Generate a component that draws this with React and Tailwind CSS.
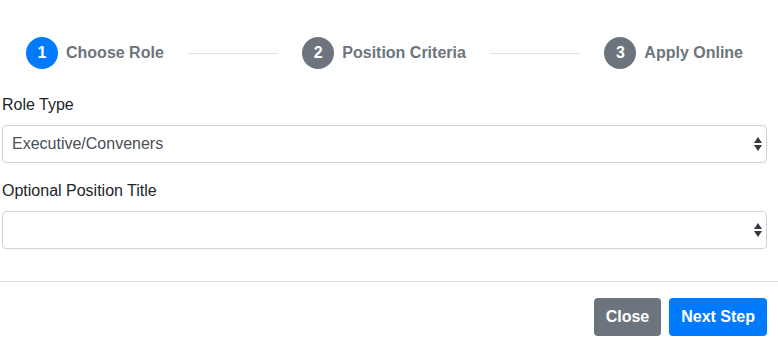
import React from "react";

const font = { fontFamily: '"Liberation Sans", Arial, sans-serif' };

function Step({ n, label, active }) {
  return (
    <div className="flex items-center shrink-0">
      <div
        className={`w-8 h-8 rounded-full flex items-center justify-center text-white font-bold text-[16px] ${
          active ? "bg-[#007bff]" : "bg-[#6c757d]"
        }`}
      >
        {n}
      </div>
      <span className="ml-2 font-bold text-[16px] text-[#6c757d]">{label}</span>
    </div>
  );
}

function Arrows() {
  return (
    <svg
      width="8"
      height="16"
      viewBox="0 0 8 16"
      className="absolute right-[4px] top-1/2 -translate-y-1/2 pointer-events-none"
    >
      <path d="M4 1 L8 7 L0 7 Z" fill="#343a40" />
      <path d="M0 9 L8 9 L4 15 Z" fill="#343a40" />
    </svg>
  );
}

function Select({ value }) {
  return (
    <div className="relative h-[38px] border border-[#ced4da] rounded-[4px] bg-white flex items-center pl-[9px] text-[16px] text-[#495057]">
      <span>{value}</span>
      <Arrows />
    </div>
  );
}

export default function App() {
  return (
    <div className="w-[778px] h-[344px] bg-white overflow-hidden text-[#212529]" style={font}>
      <div className="flex items-center pt-[37px] pl-[26px] pr-[35px]">
        <Step n="1" label="Choose Role" active />
        <div className="flex-1 h-px bg-[#dee2e6] mx-6" />
        <Step n="2" label="Position Criteria" />
        <div className="flex-1 h-px bg-[#dee2e6] mx-6" />
        <Step n="3" label="Apply Online" />
      </div>
      <div className="pl-[2px] pr-[11px] pt-[24px]">
        <div className="mb-4">
          <div className="text-[16px] leading-6 mb-2">Role Type</div>
          <Select value="Executive/Conveners" />
        </div>
        <div className="mb-4">
          <div className="text-[16px] leading-6 mb-2">Optional Position Title</div>
          <Select value="" />
        </div>
      </div>
      <div className="mt-8 border-t border-[#dee2e6] flex justify-end gap-2 pt-4 pr-[11px]">
        <button className="h-[38px] px-3 rounded-[4px] bg-[#6c757d] text-white text-[16px] font-bold">
          Close
        </button>
        <button className="h-[38px] px-3 rounded-[4px] bg-[#007bff] text-white text-[16px] font-bold">
          Next Step
        </button>
      </div>
    </div>
  );
}
